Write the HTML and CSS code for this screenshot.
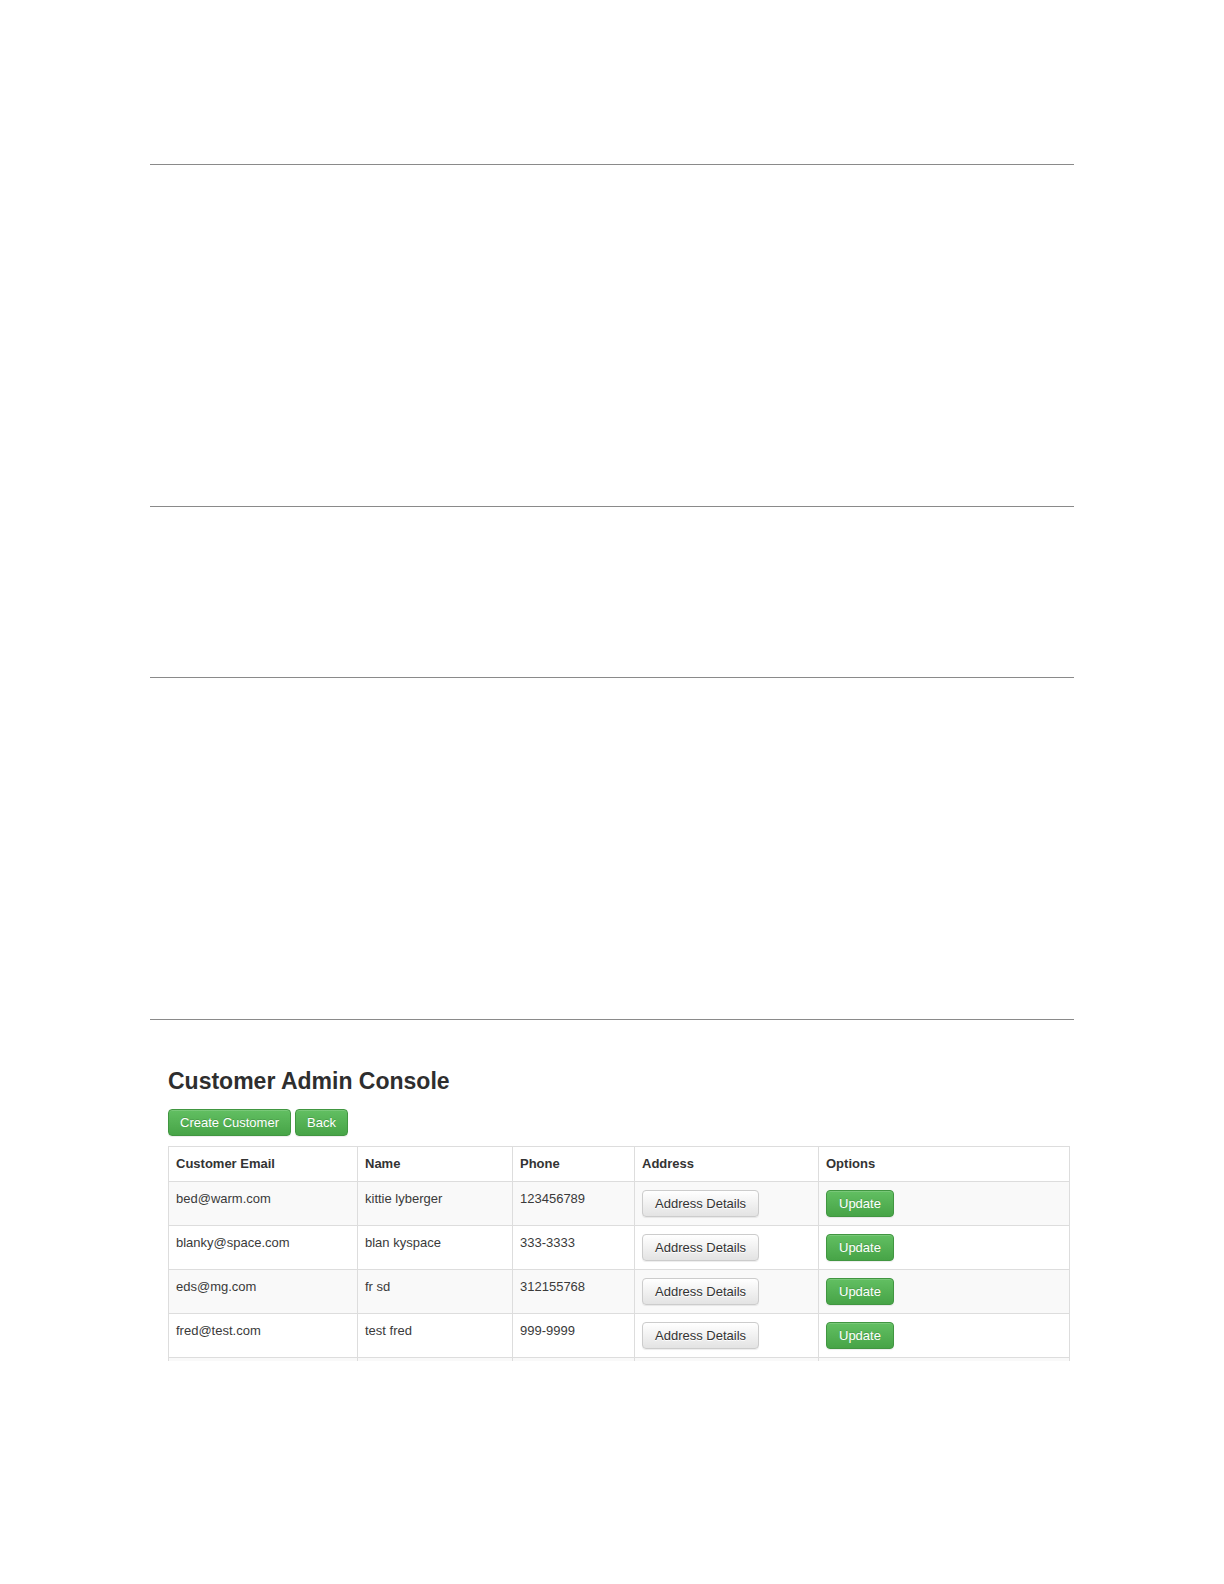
FILE: index.html
```html
<!DOCTYPE html>
<html>
<head>
<meta charset="utf-8">
<title>Customer Admin Console</title>
<link rel="stylesheet" href="styles.css">
</head>
<body>
<div class="page">
  <div class="rule"></div>
  <div class="gap-lg"></div>
  <div class="rule"></div>
  <div class="gap-sm"></div>
  <div class="rule"></div>
  <div class="gap-lg"></div>
  <div class="rule"></div>
  <section class="console">
    <h3 class="title">Customer Admin Console</h3>
    <div class="actions">
      <button class="btn btn-success btn-top">Create Customer</button>
      <button class="btn btn-success btn-top">Back</button>
    </div>
    <div class="table-clip">
      <table class="grid">
        <colgroup>
          <col class="c1"><col class="c2"><col class="c3"><col class="c4"><col class="c5">
        </colgroup>
        <thead>
          <tr><th>Customer Email</th><th>Name</th><th>Phone</th><th>Address</th><th>Options</th></tr>
        </thead>
        <tbody>
          <tr><td>bed@warm.com</td><td>kittie lyberger</td><td>123456789</td><td><button class="btn btn-default">Address Details</button></td><td><button class="btn btn-success">Update</button></td></tr>
          <tr><td>blanky@space.com</td><td>blan kyspace</td><td>333-3333</td><td><button class="btn btn-default">Address Details</button></td><td><button class="btn btn-success">Update</button></td></tr>
          <tr><td>eds@mg.com</td><td>fr sd</td><td>312155768</td><td><button class="btn btn-default">Address Details</button></td><td><button class="btn btn-success">Update</button></td></tr>
          <tr><td>fred@test.com</td><td>test fred</td><td>999-9999</td><td><button class="btn btn-default">Address Details</button></td><td><button class="btn btn-success">Update</button></td></tr>
          <tr class="tail"><td></td><td></td><td></td><td></td><td></td></tr>
        </tbody>
      </table>
    </div>
  </section>
</div>
</body>
</html>
```

FILE: styles.css
```css
html, body {
  margin: 0;
  padding: 0;
  background: #ffffff;
}
body {
  font-family: "Liberation Sans", Arial, sans-serif;
  color: #333333;
  font-size: 13px;
}
.page {
  width: 924px;
  margin-left: 150px;
  padding-top: 164px;
  height: 1420px;
}
.rule {
  height: 0;
  border-top: 1px solid #8a8a8a;
}
.gap-lg { height: 341px; }
.gap-sm { height: 170px; }

.console {
  padding: 48px 0 0 18px;
}
.title {
  margin: 0;
  font-size: 23px;
  line-height: 26px;
  font-weight: bold;
  color: #2e2e2e;
}
.actions {
  margin-top: 15px;
  display: flex;
  gap: 4px;
}
.btn {
  font-family: "Liberation Sans", Arial, sans-serif;
  font-size: 13px;
  line-height: 17px;
  padding: 4px 12px;
  border-radius: 4px;
  border: 1px solid #cccccc;
  cursor: pointer;
  display: inline-block;
  vertical-align: top;
  margin: 0;
}
.btn-top {
  padding: 4px 11px;
  line-height: 17px;
}
.btn-success {
  color: #ffffff;
  background: linear-gradient(to bottom, #62bf62 0%, #47a447 100%);
  border-color: #419641;
  text-shadow: 0 -1px 0 rgba(0,0,0,0.15);
  box-shadow: inset 0 1px 0 rgba(255,255,255,0.15), 0 1px 1px rgba(0,0,0,0.075);
}
.btn-default {
  color: #333333;
  background: linear-gradient(to bottom, #ffffff 0%, #e3e3e3 100%);
  border-color: #cccccc;
  text-shadow: 0 1px 0 #ffffff;
  box-shadow: inset 0 1px 0 rgba(255,255,255,0.15), 0 1px 1px rgba(0,0,0,0.075);
}

.table-clip {
  margin-top: 10px;
  width: 904px;
  height: 215px;
  overflow: hidden;
}
.grid {
  width: 901px;
  table-layout: fixed;
  border-collapse: collapse;
  border: 1px solid #dddddd;
}
.c1 { width: 189px; }
.c2 { width: 155px; }
.c3 { width: 122px; }
.c4 { width: 184px; }
.c5 { width: 251px; }
.grid th, .grid td {
  border: 1px solid #dddddd;
  padding: 8px 7px;
  text-align: left;
  vertical-align: top;
  line-height: 18px;
  font-size: 13px;
}
.grid th {
  font-weight: bold;
  color: #333333;
}
.grid td {
  color: #3a3a3a;
}
.grid tbody tr:nth-child(odd) td {
  background: #f9f9f9;
}
.grid .tail td {
  height: 27px;
}
```
